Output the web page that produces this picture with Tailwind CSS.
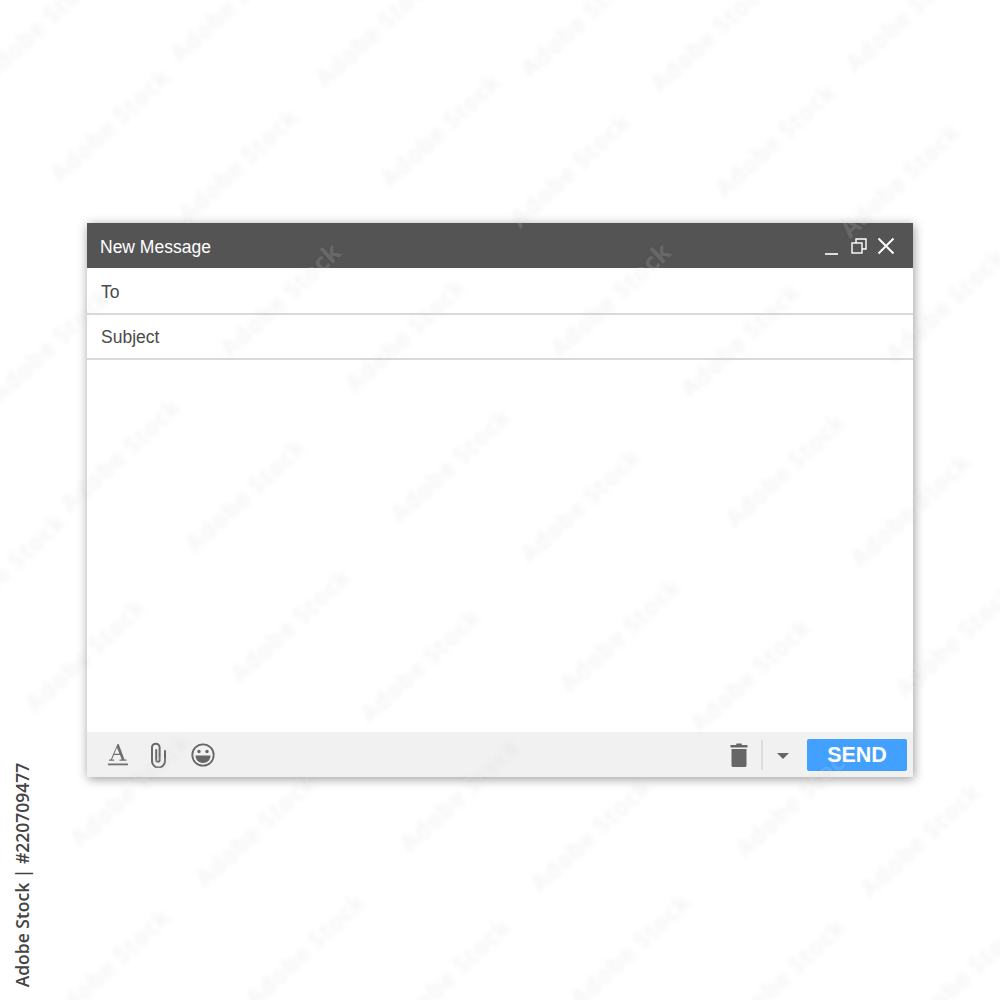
<!DOCTYPE html>
<html lang="en">
<head>
    <meta charset="UTF-8">
    <title>New Message</title>
    <script src="https://cdn.jsdelivr.net/npm/@tailwindcss/browser@4"></script>
</head>
<body class="bg-white font-['Liberation_Sans',Arial,sans-serif]">

<div class="relative w-[1000px] h-[1000px] overflow-hidden pt-[223px] pl-[87px]">

    <div class="w-[826px] h-[554px] flex flex-col bg-white shadow-[1px_2px_10px_rgba(0,0,0,0.4)]">
        <div class="h-[45px] shrink-0 flex items-center justify-between bg-[#545454] pl-[13px] pr-[18px]">
            <span class="text-[17.5px] text-white pt-[3px]">New Message</span>
            <div class="flex items-center">
                <svg width="14" height="18" viewBox="0 0 14 18" class="mt-[3px]"><path d="M1 16h13" stroke="#fff" stroke-width="1.6"/></svg>
                <svg width="16" height="16" viewBox="0 0 16 16" fill="none" stroke="#fff" stroke-width="1.4" class="ml-[13px]"><rect x="1" y="5" width="10" height="10"/><path d="M5 5V1h10v10h-4"/></svg>
                <svg width="18" height="18" viewBox="0 0 18 18" class="ml-[10px]"><path d="M1.500 1.500l15 15M16.500 1.500l-15 15" stroke="#fff" stroke-width="2"/></svg>
            </div>
        </div>

        <div class="h-[47px] shrink-0 flex items-center border-b-2 border-[#d9d9d9] pl-[14px] pt-[3px] text-[17.5px] text-[#4a4a4a]">To</div>
        <div class="h-[45px] shrink-0 flex items-center border-b-2 border-[#d9d9d9] pl-[14px] pt-[1px] text-[17.5px] text-[#4a4a4a]">Subject</div>

        <div class="flex-1"></div>

        <div class="h-[45px] shrink-0 flex items-center justify-between bg-[#f1f1f1] pl-[21px] pr-[6px]">
            <div class="flex items-center">
                <svg width="22" height="24" viewBox="0 0 22 24" fill="#707070">
                    <path fill-rule="evenodd" d="M9.500 1h1.200L16.500 16.600h2v1.200H11.500v-1.200h2.300L11.900 12H5.900L4 16.600h2.200v1.200H1v-1.200h1.800zM6.400 10.800H11.400L8.900 4.400z"/>
                    <rect x="0" y="20.500" width="20" height="1.800"/>
                </svg>
                <svg width="20" height="26" viewBox="0 0 20 26" fill="none" stroke="#6a6a6a" stroke-width="2" stroke-linecap="round" class="ml-[18px]">
                    <path d="M17 9v10a6.500 6.500 0 0 1-13 0V5.500a3.800 3.800 0 0 1 7.600 0V18a1.700 1.700 0 0 1-3.400 0V8"/>
                </svg>
                <svg width="24" height="24" viewBox="0 0 24 24" class="ml-[23px]">
                    <circle cx="12" cy="12" r="10.700" fill="none" stroke="#666666" stroke-width="1.800"/>
                    <circle cx="8" cy="8.500" r="1.700" fill="#666666"/>
                    <circle cx="16" cy="8.500" r="1.700" fill="#666666"/>
                    <path d="M4.500 12.500h15c0 4.500-3.200 7.500-7.500 7.500s-7.500-3-7.500-7.500z" fill="#666666"/>
                </svg>
            </div>
            <div class="flex items-center">
                <svg width="18" height="26" viewBox="0 0 18 26" fill="#666666">
                    <path d="M6.500 1.500h5l.5 1.500h5.500v2.500H.5V3H6z"/>
                    <path d="M1.500 7h15v16.500a1.500 1.500 0 0 1-1.500 1.500H3a1.500 1.500 0 0 1-1.500-1.500z"/>
                </svg>
                <div class="w-[2px] h-[30px] bg-[#dcdcdc] ml-[13px]"></div>
                <div class="w-0 h-0 ml-[14px] mt-[3px] border-x-[6px] border-x-transparent border-t-[6px] border-t-[#666666]"></div>
                <button class="w-[100px] h-[32px] ml-[18px] pt-[1px] flex items-center justify-center rounded-[2px] bg-[#42a0ff] text-white font-bold text-[21.500px]">SEND</button>
            </div>
        </div>
    </div>

    <div id="marks" class="absolute inset-0 pointer-events-none"></div>

    <div class="absolute left-[22px] top-[875px] -translate-x-1/2 -translate-y-1/2 -rotate-90 whitespace-nowrap font-['Open_Sans',sans-serif] font-semibold text-[17.500px] text-[#444444]">Adobe Stock | #220709477</div>
</div>

<script>
    // faint "Adobe Stock" watermark, centre points read off the picture
    const points = [
        [40,25],[230,5],[375,30],[580,20],[710,35],[905,15],
        [110,125],[238,165],[440,130],[570,170],[775,140],[900,180],
        [50,345],[280,300],[405,335],[610,300],[740,340],[945,305],
        [120,455],[245,495],[450,465],[580,505],[785,470],[910,510],
        [5,570],[85,655],[290,625],[420,665],[620,635],[750,675],[955,640],
        [130,790],[255,830],[460,795],[590,835],[795,800],[920,840],
        [110,965],[305,950],[450,975],[630,950],[785,975],[965,975]
    ];
    const marks = document.getElementById("marks");
    points.forEach(p => {
        const span = document.createElement("span");
        span.className = "absolute -translate-x-1/2 -translate-y-1/2 -rotate-[43deg] whitespace-nowrap font-['Open_Sans',sans-serif] font-bold text-[25px] text-white/15 [text-shadow:0_0_5px_rgba(0,0,0,0.04)]";
        span.style.left = p[0] + "px";
        span.style.top = p[1] + "px";
        span.textContent = "Adobe Stock";
        marks.appendChild(span);
    });
</script>

</body>
</html>
